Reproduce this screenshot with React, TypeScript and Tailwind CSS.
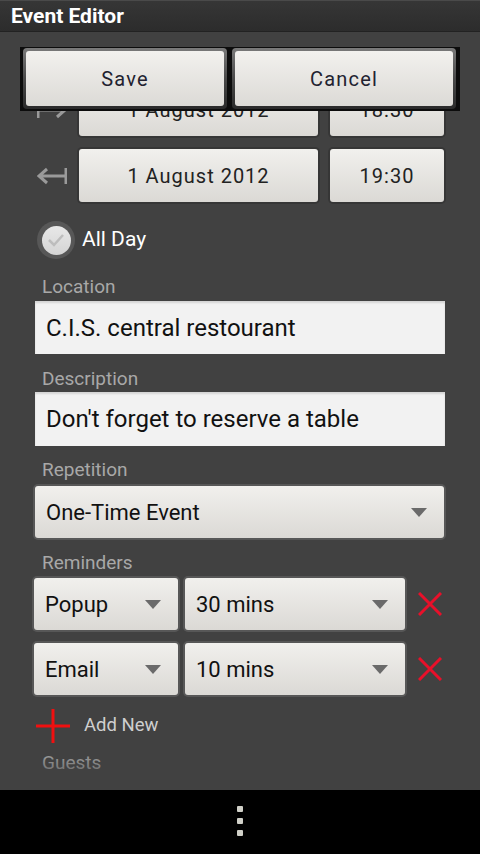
import React from "react";

const Chevron: React.FC = () => (
  <svg width="16" height="9" viewBox="0 0 16 9" className="shrink-0">
    <path d="M0 0 H16 L8 9 Z" fill="#6a6a6a" />
  </svg>
);

const RemoveIcon: React.FC = () => (
  <svg width="24" height="24" viewBox="0 0 24 24">
    <path d="M1 1 L23 23 M23 1 L1 23" stroke="#e8102a" strokeWidth="3" />
  </svg>
);

interface SelectProps {
  value: string;
  className?: string;
}

const Select: React.FC<SelectProps> = ({ value, className }) => (
  <div className={`h-[56px] shrink-0 rounded-[5px] bg-[#575757] p-[2px] ${className ?? ""}`}>
    <div className="flex h-full items-center justify-between rounded-[3px] bg-gradient-to-b from-[#f1f0ed] to-[#dbd9d5] pl-[11px] pr-[17px] text-[22px] text-[#111]">
      <span>{value}</span>
      <Chevron />
    </div>
  </div>
);

const PickerButton: React.FC<{ label: string; className: string }> = ({ label, className }) => (
  <div className={`h-[57px] shrink-0 rounded-[5px] bg-[#363636] p-[2px] ${className}`}>
    <div className="flex h-full items-center justify-center rounded-[3px] bg-gradient-to-b from-[#f1f0ed] to-[#dbd9d5] text-[20px] tracking-[0.05em] text-[#222]">
      {label}
    </div>
  </div>
);

const FieldLabel: React.FC<{ text: string; className: string }> = ({ text, className }) => (
  <div className={`h-[24px] text-[19px] leading-[24px] text-[#a8a8a8] ${className}`}>{text}</div>
);

const TextField: React.FC<{ value: string; className: string }> = ({ value, className }) => (
  <div
    className={`flex items-center bg-[#f2f2f2] pl-[11px] text-[24px] text-[#111] shadow-[inset_0_2px_2px_rgba(0,0,0,0.12)] ${className}`}
  >
    {value}
  </div>
);

const ReminderRow: React.FC<{ type: string; time: string; className: string }> = ({ type, time, className }) => (
  <div className={`flex items-center ${className}`}>
    <Select value={type} className="w-[148px]" />
    <Select value={time} className="ml-[3px] w-[224px]" />
    <div className="ml-[11px] shrink-0">
      <RemoveIcon />
    </div>
  </div>
);

export default function App() {
  return (
    <div className="flex h-[854px] w-full flex-col overflow-hidden bg-[#414141] font-['Roboto',sans-serif]">
      <header className="h-[32px] shrink-0 border-t border-[#4a4a4a] border-b border-b-[#222] bg-gradient-to-b from-[#363636] to-[#2c2c2c] pl-[11px] text-[21px] font-bold leading-[30px] text-white">
        Event Editor
      </header>

      <main className="relative flex-1 overflow-hidden">
        <div className="flex flex-col px-[32px] pt-[49px]">
          <div className="flex items-center">
            <div className="flex w-[45px] shrink-0 justify-start pl-[5px]">
              <svg width="30" height="20" viewBox="0 0 30 20">
                <path d="M1 2 V18 M1 10 H28 M20 3 L28 10 L20 17" stroke="#9a9a9a" strokeWidth="3" fill="none" />
              </svg>
            </div>
            <PickerButton label="1 August 2012" className="w-[243px]" />
            <PickerButton label="18:30" className="ml-[8px] w-[118px]" />
          </div>
          <div className="mt-[9px] flex items-center">
            <div className="flex w-[45px] shrink-0 justify-start pl-[5px]">
              <svg width="30" height="20" viewBox="0 0 30 20">
                <path d="M29 2 V18 M29 10 H2 M10 3 L2 10 L10 17" stroke="#9a9a9a" strokeWidth="3" fill="none" />
              </svg>
            </div>
            <PickerButton label="1 August 2012" className="w-[243px]" />
            <PickerButton label="19:30" className="ml-[8px] w-[118px]" />
          </div>

          <div className="mt-[16px] flex h-[40px] items-center">
            <div className="ml-[5px] flex h-[38px] w-[38px] items-center justify-center rounded-full bg-[#575757]">
              <div className="flex h-[29px] w-[29px] items-center justify-center rounded-full bg-gradient-to-b from-[#e8e8e8] to-[#d4d4d4]">
                <svg width="18" height="14" viewBox="0 0 18 14">
                  <path d="M2 7 L7 12 L16 2" stroke="#bdbdbd" strokeWidth="2.5" fill="none" />
                </svg>
              </div>
            </div>
            <span className="ml-[7px] text-[21px] text-white">All Day</span>
          </div>

          <FieldLabel text="Location" className="ml-[10px] mt-[15px]" />
          <TextField value="C.I.S. central restourant" className="mx-[3px] mt-[2px] h-[53px]" />

          <FieldLabel text="Description" className="ml-[10px] mt-[13px]" />
          <TextField value="Don't forget to reserve a table" className="mx-[3px] mt-[1px] h-[54px]" />

          <FieldLabel text="Repetition" className="ml-[10px] mt-[12px]" />
          <Select value="One-Time Event" className="ml-[1px] mr-[2px] mt-[2px]" />

          <FieldLabel text="Reminders" className="ml-[10px] mt-[11px]" />
          <ReminderRow type="Popup" time="30 mins" className="mt-[1px]" />
          <ReminderRow type="Email" time="10 mins" className="mt-[9px]" />

          <div className="mt-[13px] flex h-[32px] items-center">
            <svg width="34" height="34" viewBox="0 0 34 34" className="ml-[4px]">
              <path d="M17 0 V34 M0 17 H34" stroke="#f01010" strokeWidth="3" />
            </svg>
            <span className="ml-[14px] text-[18.5px] text-[#cfcfcf]">Add New</span>
          </div>

          <FieldLabel text="Guests" className="ml-[10px] mt-[9px]" />
        </div>

        <div className="pointer-events-none absolute inset-x-0 bottom-0 h-[40px] bg-gradient-to-b from-transparent to-[#414141]" />

        <div className="absolute left-[20px] top-[15px] flex h-[64px] w-[440px] gap-[5px] bg-[#0c0c0c] pl-[3px] pt-[1px]">
          <div className="h-[61px] w-[204px] rounded-[4px] bg-gradient-to-b from-[#7a7a7a] via-[#4a4a4a] to-[#2a2a2a] p-[3px]">
            <div className="flex h-full items-center justify-center rounded-[3px] bg-gradient-to-b from-[#f2f1ee] to-[#dcdad6] text-[20px] tracking-[0.06em] text-[#222230]">
              Save
            </div>
          </div>
          <div className="h-[61px] w-[224px] rounded-[4px] bg-gradient-to-b from-[#7a7a7a] via-[#4a4a4a] to-[#2a2a2a] p-[3px]">
            <div className="flex h-full items-center justify-center rounded-[3px] bg-gradient-to-b from-[#f2f1ee] to-[#dcdad6] text-[20px] tracking-[0.06em] text-[#222230]">
              Cancel
            </div>
          </div>
        </div>
      </main>

      <nav className="flex h-[64px] shrink-0 flex-col items-center justify-center gap-[6px] bg-black pb-[2px]">
        <span className="h-[6px] w-[6px] rounded-[1px] bg-[#d0d0c8]" />
        <span className="h-[6px] w-[6px] rounded-[1px] bg-[#d0d0c8]" />
        <span className="h-[6px] w-[6px] rounded-[1px] bg-[#d0d0c8]" />
      </nav>
    </div>
  );
}
